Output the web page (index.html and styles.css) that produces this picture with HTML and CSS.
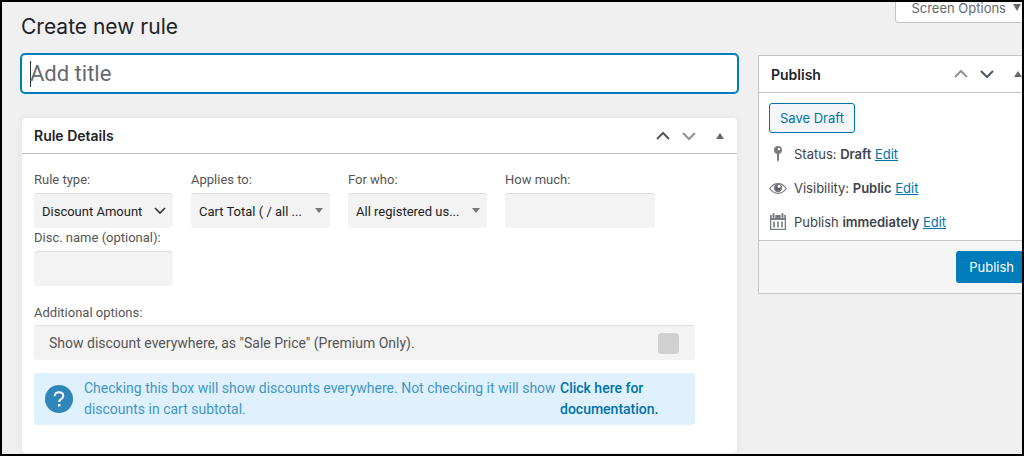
FILE: index.html
```html
<!DOCTYPE html>
<html lang="en">
<head>
    <meta charset="UTF-8">
    <meta name="viewport" content="width=device-width, initial-scale=1.0">
    <title>Create new rule</title>
    <link rel="stylesheet" href="styles.css">
</head>
<body>
    <div class="frame">
        <div class="wrap">
            <div class="header">
                <h1>Create new rule</h1>
                <button type="button" class="screen-options">Screen Options
                    <svg width="10" height="8" viewBox="0 0 10 8"><path d="M1 0h8L5 7z" fill="#646970"/></svg>
                </button>
            </div>

            <div class="columns">
                <main>
                    <input type="text" class="title-input" placeholder="Add title" aria-label="Add title">

                    <section class="postbox rule-box">
                        <div class="postbox-header">
                            <h2>Rule Details</h2>
                            <div class="handle-actions">
                                <button type="button" aria-label="Move up"><svg width="14" height="10" viewBox="0 0 14 10"><path d="M1 8l6-6 6 6" fill="none" stroke="#50575e" stroke-width="2"/></svg></button>
                                <button type="button" aria-label="Move down"><svg width="14" height="10" viewBox="0 0 14 10"><path d="M1 2l6 6 6-6" fill="none" stroke="#8f949a" stroke-width="2"/></svg></button>
                                <button type="button" class="toggle" aria-label="Toggle panel"><svg width="8" height="8" viewBox="0 0 8 8"><path d="M0 7h8L4 1z" fill="#646970"/></svg></button>
                            </div>
                        </div>

                        <form class="rule-form">
                            <div class="fields">
                                <div class="field">
                                    <label for="ruleType">Rule type:</label>
                                    <select id="ruleType" class="select-chevron">
                                        <option>Discount Amount</option>
                                    </select>
                                </div>
                                <div class="field">
                                    <label for="appliesTo">Applies to:</label>
                                    <select id="appliesTo">
                                        <option>Cart Total ( / all ...</option>
                                    </select>
                                </div>
                                <div class="field">
                                    <label for="forWho">For who:</label>
                                    <select id="forWho">
                                        <option>All registered us...</option>
                                    </select>
                                </div>
                                <div class="field field-amount">
                                    <label for="howMuch">How much:</label>
                                    <input type="text" id="howMuch">
                                </div>
                                <div class="field">
                                    <label for="discName">Disc. name (optional):</label>
                                    <input type="text" id="discName">
                                </div>
                            </div>

                            <p class="options-title">Additional options:</p>
                            <div class="option-row">
                                <label for="salePrice">Show discount everywhere, as "Sale Price" (Premium Only).</label>
                                <input type="checkbox" id="salePrice">
                            </div>

                            <div class="notice">
                                <svg class="notice-icon" width="28" height="28" viewBox="0 0 28 28">
                                    <circle cx="14" cy="14" r="14" fill="#2e86ba"/>
                                    <path d="M9.6 11.2c0-2.4 1.9-4 4.4-4s4.3 1.5 4.3 3.7c0 3-4.2 3.2-4.2 6.1" fill="none" stroke="#fff" stroke-width="2"/>
                                    <rect x="13" y="19" width="2.4" height="2.4" fill="#fff"/>
                                </svg>
                                <p>Checking this box will show discounts everywhere. Not checking it will show discounts in cart subtotal.</p>
                                <a href="#">Click here for documentation.</a>
                            </div>
                        </form>
                    </section>
                </main>

                <aside class="postbox publish-box">
                    <div class="postbox-header">
                        <h2>Publish</h2>
                        <div class="handle-actions">
                            <button type="button" aria-label="Move up"><svg width="14" height="10" viewBox="0 0 14 10"><path d="M1 8l6-6 6 6" fill="none" stroke="#8f949a" stroke-width="2"/></svg></button>
                            <button type="button" aria-label="Move down"><svg width="14" height="10" viewBox="0 0 14 10"><path d="M1 2l6 6 6-6" fill="none" stroke="#50575e" stroke-width="2"/></svg></button>
                            <button type="button" class="toggle" aria-label="Toggle panel"><svg width="8" height="8" viewBox="0 0 8 8"><path d="M0 7h8L4 1z" fill="#646970"/></svg></button>
                        </div>
                    </div>
                    <div class="publish-body">
                        <button type="button" class="save-draft">Save Draft</button>
                        <ul class="publish-info">
                            <li>
                                <svg width="18" height="18" viewBox="0 0 18 18"><circle cx="9" cy="5" r="4" fill="#787c82"/><circle cx="10" cy="4" r="1.2" fill="#fff"/><path d="M8 8h2v7l-1 2-1-2z" fill="#787c82"/></svg>
                                <span>Status: <b>Draft</b> <a href="#">Edit</a></span>
                            </li>
                            <li>
                                <svg width="18" height="18" viewBox="0 0 18 18"><path d="M.8 9.500C5 3 13 3 17.200 9.500 13 16 5 16 .8 9.500z" fill="none" stroke="#787c82" stroke-width="1.200"/><circle cx="9" cy="9" r="4.200" fill="#787c82"/><circle cx="9" cy="9" r="2.400" fill="#5a5f66"/><circle cx="10" cy="7.500" r="1.400" fill="#fff"/></svg>
                                <span>Visibility: <b>Public</b> <a href="#">Edit</a></span>
                            </li>
                            <li>
                                <svg width="18" height="18" viewBox="0 0 18 18">
                                    <path d="M1 2h16v15H1z" fill="#787c82"/>
                                    <path d="M2.300 7h13.400v8.800H2.300z" fill="#fff"/>
                                    <path d="M4.500 1v4M13.500 1v4" stroke="#fff" stroke-width="3.600"/>
                                    <path d="M4.500 1v3M13.500 1v3" stroke="#787c82" stroke-width="2" stroke-linecap="round"/>
                                    <path d="M5 8.500v6M9 8.500v6M13 8.500v6" stroke="#787c82" stroke-width="1.600"/>
                                </svg>
                                <span>Publish <b>immediately</b> <a href="#">Edit</a></span>
                            </li>
                        </ul>
                    </div>
                    <div class="publish-footer">
                        <button type="button" class="publish-button">Publish</button>
                    </div>
                </aside>
            </div>
        </div>
    </div>
</body>
</html>
```
FILE: styles.css
```css
* {
    box-sizing: border-box;
}

body {
    margin: 0;
    font-family: Inter, "Liberation Sans", sans-serif;
    font-size: 13px;
    color: #3c434a;
    background-color: #f0f0f0;
}

button {
    font-family: inherit;
    cursor: pointer;
}

a {
    color: #0073aa;
}

.frame {
    display: flex;
    height: 100vh;
    border: 2px solid #000;
    overflow: hidden;
}

/* the side column runs past the right edge */
.wrap {
    flex: 1;
    min-width: 0;
    display: flex;
    flex-direction: column;
    margin-right: -16px;
    padding-left: 19px;
}

.header {
    display: flex;
    justify-content: space-between;
    align-items: flex-start;
    height: 52px;
}

h1 {
    margin: 0;
    padding-top: 11px;
    font-size: 21px;
    font-weight: 400;
    line-height: 28px;
    color: #1d2327;
}

.screen-options {
    display: flex;
    align-items: center;
    gap: 6px;
    height: 21px;
    padding: 0 15px 8px;
    border: 1px solid #c3c4c7;
    border-top: 0;
    border-radius: 0 0 4px 4px;
    background-color: #fff;
    font-size: 13px;
    color: #646970;
}

.columns {
    flex: 1;
    min-height: 0;
    display: grid;
    grid-template-columns: minmax(0, 1fr) 280px;
    gap: 20px;
}

main {
    display: flex;
    flex-direction: column;
    gap: 24px;
}

.title-input {
    width: 100%;
    height: 39px;
    padding: 0 8px;
    border: 1px solid #007cba;
    border-radius: 4px;
    box-shadow: 0 0 0 1px #007cba;
    /* text cursor */
    background: #fff linear-gradient(#2c3338, #2c3338) 8px center / 1px 26px no-repeat;
    font-family: Roboto, sans-serif;
    font-size: 22px;
    outline: 0;
}

.title-input::placeholder {
    color: #646970;
    opacity: 1;
}

.postbox {
    border: 1px solid #c3c4c7;
    background-color: #fff;
}

.rule-box {
    flex: 1;
    border-color: #ebebeb;
    border-radius: 5px;
    box-shadow: 0 0 8px rgba(0, 0, 0, 0.05);
}

.postbox-header {
    display: flex;
    justify-content: space-between;
    align-items: center;
    height: 36px;
    padding: 0 13px 0 12px;
    border-bottom: 1px solid #c3c4c7;
}

h2 {
    margin: 0;
    font-size: 14px;
    font-weight: 600;
    color: #1d2327;
}

.handle-actions {
    display: flex;
    align-items: center;
    gap: 12px;
}

.handle-actions button {
    display: flex;
    padding: 0;
    border: 0;
    background: none;
}

.handle-actions .toggle {
    margin-left: 8px;
}

.rule-form {
    padding: 16px 42px 0 12px;
    font-family: Roboto, sans-serif;
    font-size: 14px;
    color: #555;
}

.fields {
    display: flex;
    flex-wrap: wrap;
    column-gap: 18px;
}

.field {
    display: flex;
    flex-direction: column;
    gap: 3px;
    width: 139px;
}

.field-amount {
    width: 150px;
}

.field label,
.options-title {
    font-size: 13px;
    line-height: 20px;
    white-space: nowrap;
}

.field input,
.field select {
    width: 100%;
    height: 35px;
    padding: 0 8px;
    border: 0;
    border-top: 1px solid #ddd;
    border-radius: 4px;
    background-color: #f3f3f3;
    font-family: inherit;
    font-size: 13px;
    color: #222;
}

.field select {
    appearance: none;
    background-image: url("data:image/svg+xml,%3Csvg xmlns='http://www.w3.org/2000/svg' width='8' height='6'%3E%3Cpath d='M0 0h8L4 5z' fill='%23777'/%3E%3C/svg%3E");
    background-repeat: no-repeat;
    background-position: right 7px center;
}

.field .select-chevron {
    background-image: url("data:image/svg+xml,%3Csvg xmlns='http://www.w3.org/2000/svg' width='12' height='8'%3E%3Cpath d='M1 1l5 5 5-5' fill='none' stroke='%23333' stroke-width='1.6'/%3E%3C/svg%3E");
}

.options-title {
    margin: 17px 0 2px;
}

.option-row {
    display: flex;
    justify-content: space-between;
    align-items: center;
    height: 35px;
    padding: 0 16px 0 15px;
    border-top: 1px solid #ddd;
    border-radius: 3px;
    background-color: #f3f3f3;
}

.option-row input {
    appearance: none;
    width: 21px;
    height: 21px;
    margin: 0;
    border-radius: 4px;
    background-color: #d0d0d0;
}

.notice {
    display: flex;
    align-items: center;
    margin-top: 13px;
    padding: 5px 11px;
    border-radius: 3px;
    background-color: #dff1ff;
    line-height: 21px;
    color: #4396c4;
}

.notice-icon {
    flex-shrink: 0;
    margin-right: 11px;
}

.notice p {
    flex: 1;
    margin: 0;
}

.notice a {
    width: 124px;
    font-weight: 500;
    text-decoration: none;
}

.publish-box {
    align-self: start;
    margin-top: 1px;
}

.publish-box .postbox-header {
    height: 37px;
    padding-right: 15px;
}

.publish-body {
    padding: 10px 10px 8px;
}

.save-draft {
    height: 30px;
    padding: 0 10px;
    border: 1px solid #0073aa;
    border-radius: 3px;
    background-color: #f3f5f6;
    font-size: 13px;
    color: #0073aa;
}

.publish-info {
    display: flex;
    flex-direction: column;
    gap: 14px;
    margin: 11px 0 0;
    padding: 0;
    list-style: none;
}

.publish-info li {
    display: flex;
    align-items: center;
    gap: 7px;
    line-height: 20px;
}

.publish-info b {
    font-weight: 600;
}

.publish-footer {
    display: flex;
    justify-content: flex-end;
    padding: 10px;
    border-top: 1px solid #c3c4c7;
    background-color: #f5f5f5;
}

.publish-button {
    height: 32px;
    padding: 0 13px;
    border: 0;
    border-radius: 3px;
    background-color: #007cba;
    font-size: 13px;
    color: #fff;
}
```
